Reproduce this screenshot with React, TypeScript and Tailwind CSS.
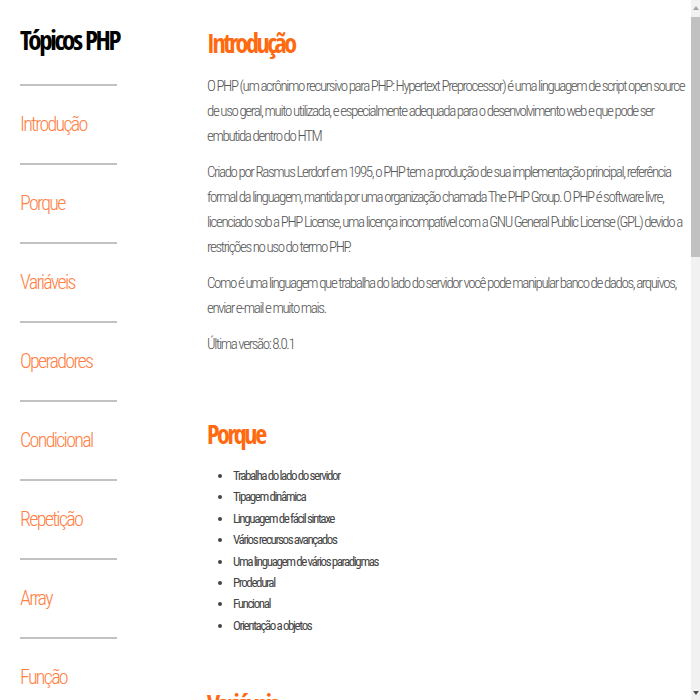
const topics = [
  "Introdução",
  "Porque",
  "Variáveis",
  "Operadores",
  "Condicional",
  "Repetição",
  "Array",
  "Função",
  "Classes",
  "Objetos",
];

const porque = [
  "Trabalha do lado do servidor",
  "Tipagem dinâmica",
  "Linguagem de fácil sintaxe",
  "Vários recursos avançados",
  "Uma linguagem de vários paradigmas",
  "Prodedural",
  "Funcional",
  "Orientação a objetos",
];

const heading =
  "font-['Open_Sans_Condensed','Roboto_Condensed',sans-serif] font-bold text-[26px] leading-9 tracking-[-2.4px] text-[#ff6a10]";

function FakeScrollbar() {
  return (
    <div aria-hidden className="fixed top-0 right-0 flex h-screen w-[9px] flex-col bg-[#f1f1f1]">
      <div className="flex h-[15px] items-center justify-center">
        <div className="h-0 w-0 border-x-[3px] border-b-[4px] border-x-transparent border-b-[#a3a3a3]" />
      </div>
      <div className="mt-[2px] h-[240px] bg-[#c1c1c1]" />
      <div className="flex-1" />
      <div className="flex h-[15px] items-center justify-center">
        <div className="h-0 w-0 border-x-[3px] border-t-[4px] border-x-transparent border-t-[#505050]" />
      </div>
    </div>
  );
}

export default function App() {
  return (
    <div className="flex min-h-[1950px] w-[691px] bg-white font-['Roboto_Condensed',Roboto,sans-serif]">
      <aside className="ml-5 w-[97px] shrink-0">
        <h1 className="mt-[22px] h-[62px] font-['Open_Sans_Condensed','Roboto_Condensed',sans-serif] text-[27px] font-bold leading-9 tracking-[-2.4px] whitespace-nowrap text-black">
          Tópicos PHP
        </h1>
        <nav>
          {topics.map((t) => (
            <div key={t}>
              <div className="h-[2px] bg-[#c2c2c2]" />
              <a className="block py-[25px] text-[20px] font-light leading-[27px] tracking-[-1.7px] whitespace-nowrap text-[#ff7f45]">
                {t}
              </a>
            </div>
          ))}
        </nav>
      </aside>
      <main className="ml-[90px] flex-1 pt-[25px]">
        <section>
          <h2 className={heading}>Introdução</h2>
          <div className="mt-[13px] space-y-[11px] text-[15px] font-light leading-[25px] tracking-[-1.4px] text-[#555]">
            <p>
              O PHP (um acrônimo recursivo para PHP: Hypertext Preprocessor) é uma linguagem de script open source de uso geral, muito utilizada, e especialmente adequada para o desenvolvimento web e que pode ser embutida dentro do HTM
            </p>
            <p>
              Criado por Rasmus Lerdorf em 1995, o PHP tem a produção de sua implementação principal, referência formal da linguagem, mantida por uma organização chamada The PHP Group. O PHP é software livre, licenciado sob a PHP License, uma licença incompatível com a GNU General Public License (GPL) devido a restrições no uso do termo PHP.
            </p>
            <p>
              Como é uma linguagem que trabalha do lado do servidor você pode manipular banco de dados, arquivos, enviar e-mail e muito mais.
            </p>
            <p>Última versão: 8.0.1</p>
          </div>
        </section>
        <section className="mt-[59px]">
          <h2 className={heading}>Porque</h2>
          <ul className="mt-[13px] list-disc pl-[26px] text-[13px] leading-[21.4px] tracking-[-1.4px] text-[#444]">
            {porque.map((p) => (
              <li key={p}>{p}</li>
            ))}
          </ul>
        </section>
        <section className="mt-[50px]">
          <h2 className={heading}>Variáveis</h2>
        </section>
      </main>
      <FakeScrollbar />
    </div>
  );
}
